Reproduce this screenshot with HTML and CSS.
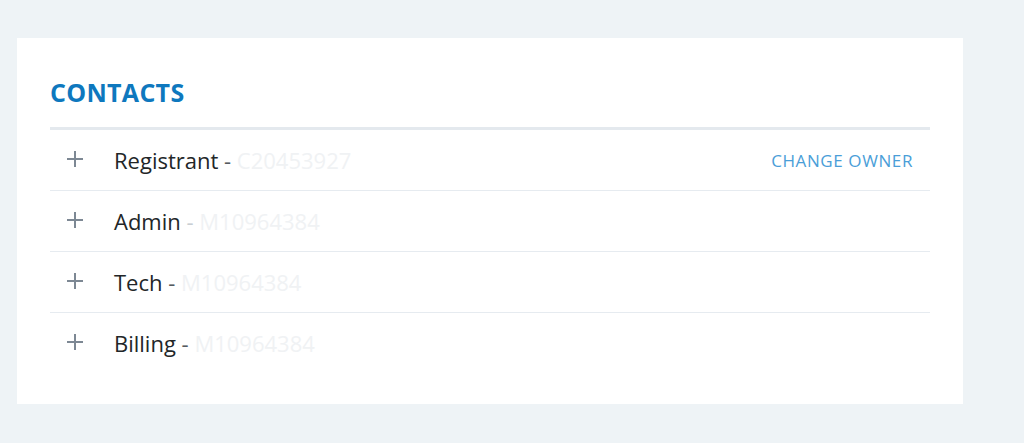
FILE: index.html
```html
<!DOCTYPE html>
<html lang="en">
<head>
    <meta charset="UTF-8">
    <meta name="viewport" content="width=device-width, initial-scale=1.0">
    <title>Contacts</title>
    <link rel="stylesheet" href="styles.css">
</head>
<body>
    <div class="card">
        <h2 class="card-title">CONTACTS</h2>

        <ul class="contact-list">
            <li class="contact-row">
                <span class="plus"></span>
                <span class="role">Registrant <span class="dash">-</span> <span class="handle">C20453927</span></span>
                <a class="change-owner" href="#">CHANGE OWNER</a>
            </li>
            <li class="contact-row">
                <span class="plus"></span>
                <span class="role">Admin <span class="dash faint">-</span> <span class="handle">M10964384</span></span>
            </li>
            <li class="contact-row">
                <span class="plus"></span>
                <span class="role">Tech <span class="dash">-</span> <span class="handle">M10964384</span></span>
            </li>
            <li class="contact-row">
                <span class="plus"></span>
                <span class="role">Billing <span class="dash">-</span> <span class="handle">M10964384</span></span>
            </li>
        </ul>
    </div>
</body>
</html>
```

FILE: styles.css
```css
body {
    margin: 0;
    padding: 38px 61px 39px 17px;
    min-height: 100vh;
    box-sizing: border-box;
    background-color: #eef3f6;
    font-family: "Open Sans", "Noto Sans", Arial, sans-serif;
}

.card {
    background-color: #ffffff;
    padding: 38px 33px 31px 33px;
}

.card-title {
    margin: 0 0 18px 0;
    font-size: 25px;
    font-weight: 700;
    line-height: 33px;
    color: #0e78be;
    letter-spacing: 0.3px;
}

.contact-list {
    list-style: none;
    margin: 0;
    padding: 0;
    border-top: 3px solid #e4e9ee;
}

.contact-row {
    display: flex;
    align-items: center;
    height: 60px;
    border-bottom: 1px solid #e6ebf0;
    padding: 0 17px 0 17px;
}

.contact-row:last-child {
    border-bottom: none;
}

.plus {
    position: relative;
    width: 16px;
    height: 16px;
    margin-right: 31px;
    margin-top: -2px;
}

.plus::before,
.plus::after {
    content: "";
    position: absolute;
    background-color: #7d8894;
}

.plus::before {
    left: 0;
    top: 7px;
    width: 16px;
    height: 2px;
}

.plus::after {
    left: 7px;
    top: 0;
    width: 2px;
    height: 16px;
}

.role {
    flex: 1;
    font-size: 22px;
    color: #222628;
}

.dash {
    color: #555b60;
}

.dash.faint {
    color: #c9ced3;
}

.handle {
    color: #f0f2f4;
}

.change-owner {
    font-size: 17px;
    color: #4a9ed8;
    text-decoration: none;
    letter-spacing: 0.6px;
}
```
